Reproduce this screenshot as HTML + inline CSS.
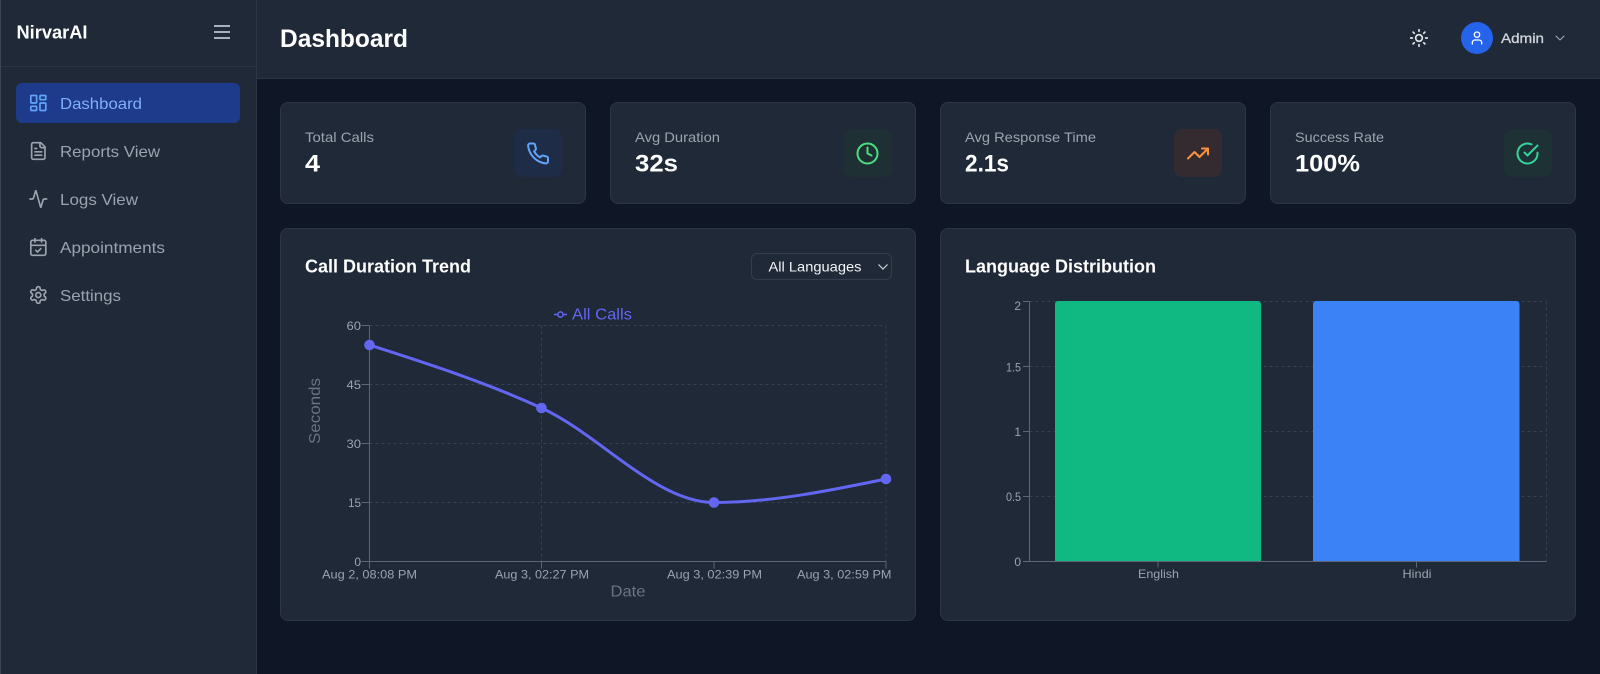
<!DOCTYPE html>
<html lang="en">
<head>
<meta charset="utf-8">
<title>NirvarAI Dashboard</title>
<style>
html,body{margin:0;padding:0;width:1600px;height:674px;overflow:hidden;background:#0f1625}
body{position:relative;font-family:"Liberation Sans",sans-serif}
.box{position:absolute;box-sizing:border-box}
.side{left:0;top:0;width:257px;height:674px;background:#1f2937;border-left:1px solid #3a4452;border-right:1px solid #2b3543}
.sdiv{left:1px;top:66px;width:255px;height:1px;background:#2b3543}
.head{left:257px;top:0;width:1343px;height:79px;background:#1f2937;border-bottom:1px solid #2b3543}
.active{left:16px;top:83px;width:224px;height:40px;background:#1e3a8a;border-radius:6px}
.card{background:#1f2937;border:1px solid #2c3644;border-radius:8px}
.ico{width:48px;height:48px;top:129px;border-radius:8px}
.sel{left:751px;top:253px;width:141px;height:27px;border:1px solid #333d4c;border-radius:6px;background:#1f2937}
.ava{left:1461px;top:22px;width:32px;height:32px;border-radius:50%;background:#2563eb}
svg.ov{position:absolute;left:0;top:0}
text{font-family:"Liberation Sans",sans-serif}
.ic{fill:none;stroke-linecap:round;stroke-linejoin:round;stroke-width:2}
.tk{font-size:12px;fill:#9ca3af}
.nav{font-size:16px;fill:#9ca3af}
.lb{font-size:14px;fill:#9ca3af}
.val{font-size:24.5px;font-weight:bold;fill:#fff}
.ttl{font-size:18px;font-weight:bold;fill:#fff}
.grid{stroke:#364050;stroke-width:1;stroke-dasharray:3 3;fill:none}
.axis{stroke:#5d6676;stroke-width:1;fill:none}
</style>
</head>
<body>
<aside class="box side"></aside>
<div class="box sdiv"></div>
<header class="box head"></header>
<div class="box active"></div>
<div class="box ava"></div>

<div class="box card" style="left:280px;top:102px;width:306px;height:102px"></div>
<div class="box card" style="left:610px;top:102px;width:306px;height:102px"></div>
<div class="box card" style="left:940px;top:102px;width:306px;height:102px"></div>
<div class="box card" style="left:1270px;top:102px;width:306px;height:102px"></div>
<div class="box ico" style="left:514px;background:#1f2c47"></div>
<div class="box ico" style="left:844px;background:#1e3033"></div>
<div class="box ico" style="left:1174px;background:#332b30"></div>
<div class="box ico" style="left:1504px;background:#1e3135"></div>

<div class="box card" style="left:280px;top:228px;width:636px;height:393px"></div>
<div class="box card" style="left:940px;top:228px;width:636px;height:393px"></div>
<div class="box sel"></div>

<svg class="ov" width="1600" height="674" viewBox="0 0 1600 674" xmlns="http://www.w3.org/2000/svg">
  <!-- sidebar -->
  <text x="16.5" y="38.5" font-size="18.5" font-weight="bold" fill="#fff" textLength="71" lengthAdjust="spacingAndGlyphs">NirvarAI</text>
  <g class="ic" stroke="#aab1bc" transform="translate(210 20)" style="stroke-linecap:butt"><path d="M4 6h16M4 12h16M4 18h16"/></g>

  <g class="ic" stroke="#60a5fa" transform="translate(28.3 93) scale(.8333)">
    <rect x="3" y="3" width="7" height="9" rx="1"/><rect x="14" y="3" width="7" height="5" rx="1"/><rect x="14" y="12" width="7" height="9" rx="1"/><rect x="3" y="16" width="7" height="5" rx="1"/>
  </g>
  <text x="60" y="109" class="nav" style="fill:#7fb0fb" textLength="82" lengthAdjust="spacingAndGlyphs">Dashboard</text>

  <g class="ic" stroke="#9ca3af" transform="translate(28.3 141) scale(.8333)">
    <path d="M15 2H6a2 2 0 0 0-2 2v16a2 2 0 0 0 2 2h12a2 2 0 0 0 2-2V7Z"/><path d="M14 2v4a2 2 0 0 0 2 2h4"/><path d="M10 9H8"/><path d="M16 13H8"/><path d="M16 17H8"/>
  </g>
  <text x="60" y="157" class="nav" textLength="100" lengthAdjust="spacingAndGlyphs">Reports View</text>

  <g class="ic" stroke="#9ca3af" transform="translate(28.3 189) scale(.8333)">
    <path d="M22 12h-2.48a2 2 0 0 0-1.93 1.46l-2.35 8.36a.25.25 0 0 1-.48 0L9.24 2.18a.25.25 0 0 0-.48 0l-2.35 8.36A2 2 0 0 1 4.49 12H2"/>
  </g>
  <text x="60" y="205" class="nav" textLength="78" lengthAdjust="spacingAndGlyphs">Logs View</text>

  <g class="ic" stroke="#9ca3af" transform="translate(28.3 237) scale(.8333)">
    <path d="M8 2v4"/><path d="M16 2v4"/><rect x="3" y="4" width="18" height="18" rx="2"/><path d="M3 10h18"/><path d="m9 16 2 2 4-4"/>
  </g>
  <text x="60" y="253" class="nav" textLength="105" lengthAdjust="spacingAndGlyphs">Appointments</text>

  <g class="ic" stroke="#9ca3af" transform="translate(28.3 285) scale(.8333)">
    <path d="M12.22 2h-.44a2 2 0 0 0-2 2v.18a2 2 0 0 1-1 1.73l-.43.25a2 2 0 0 1-2 0l-.15-.08a2 2 0 0 0-2.73.73l-.22.38a2 2 0 0 0 .73 2.73l.15.1a2 2 0 0 1 1 1.72v.51a2 2 0 0 1-1 1.74l-.15.09a2 2 0 0 0-.73 2.73l.22.38a2 2 0 0 0 2.73.73l.15-.08a2 2 0 0 1 2 0l.43.25a2 2 0 0 1 1 1.73V20a2 2 0 0 0 2 2h.44a2 2 0 0 0 2-2v-.18a2 2 0 0 1 1-1.73l.43-.25a2 2 0 0 1 2 0l.15.08a2 2 0 0 0 2.73-.73l.22-.39a2 2 0 0 0-.73-2.73l-.15-.08a2 2 0 0 1-1-1.74v-.5a2 2 0 0 1 1-1.74l.15-.09a2 2 0 0 0 .73-2.73l-.22-.38a2 2 0 0 0-2.73-.73l-.15.08a2 2 0 0 1-2 0l-.43-.25a2 2 0 0 1-1-1.73V4a2 2 0 0 0-2-2z"/><circle cx="12" cy="12" r="3"/>
  </g>
  <text x="60" y="301" class="nav" textLength="61" lengthAdjust="spacingAndGlyphs">Settings</text>

  <!-- header -->
  <text x="280" y="47" font-size="25" font-weight="bold" fill="#fff" textLength="128" lengthAdjust="spacingAndGlyphs">Dashboard</text>
  <g class="ic" stroke="#e5e7eb" transform="translate(1409 28) scale(.8333)">
    <circle cx="12" cy="12" r="4"/><path d="M12 2v2"/><path d="M12 20v2"/><path d="m4.93 4.93 1.41 1.41"/><path d="m17.66 17.66 1.41 1.41"/><path d="M2 12h2"/><path d="M20 12h2"/><path d="m6.34 17.66-1.41 1.41"/><path d="m19.07 4.93-1.41 1.41"/>
  </g>
  <g class="ic" stroke="#fff" transform="translate(1469 30) scale(.6667)">
    <path d="M19 21v-2a4 4 0 0 0-4-4H9a4 4 0 0 0-4 4v2"/><circle cx="12" cy="7" r="4"/>
  </g>
  <text x="1501" y="43" font-size="14" fill="#d1d5db" stroke="#d1d5db" stroke-width=".3" textLength="43" lengthAdjust="spacingAndGlyphs">Admin</text>
  <g class="ic" stroke="#9ca3af" transform="translate(1552 30) scale(.6667)" style="stroke-width:1.6"><path d="m6 9 6 6 6-6"/></g>

  <!-- stat cards -->
  <text x="305" y="142" class="lb" textLength="69" lengthAdjust="spacingAndGlyphs">Total Calls</text>
  <text x="305" y="171.5" class="val" textLength="15" lengthAdjust="spacingAndGlyphs">4</text>
  <g class="ic" stroke="#60a5fa" transform="translate(526 141.5)">
    <path d="M22 16.92v3a2 2 0 0 1-2.18 2 19.79 19.79 0 0 1-8.63-3.07 19.5 19.5 0 0 1-6-6 19.79 19.79 0 0 1-3.07-8.67A2 2 0 0 1 4.11 2h3a2 2 0 0 1 2 1.72 12.84 12.84 0 0 0 .7 2.81 2 2 0 0 1-.45 2.11L8.09 9.91a16 16 0 0 0 6 6l1.27-1.27a2 2 0 0 1 2.11-.45 12.84 12.84 0 0 0 2.81.7A2 2 0 0 1 22 16.92z"/>
  </g>

  <text x="635" y="142" class="lb" textLength="85" lengthAdjust="spacingAndGlyphs">Avg Duration</text>
  <text x="635" y="171.5" class="val" textLength="43" lengthAdjust="spacingAndGlyphs">32s</text>
  <g class="ic" stroke="#4ade80" transform="translate(855.5 141.5)">
    <circle cx="12" cy="12" r="10"/><polyline points="12 6 12 12 16 14"/>
  </g>

  <text x="965" y="142" class="lb" textLength="131" lengthAdjust="spacingAndGlyphs">Avg Response Time</text>
  <text x="965" y="171.5" class="val" textLength="44" lengthAdjust="spacingAndGlyphs">2.1s</text>
  <g class="ic" stroke="#fb923c" transform="translate(1186 141.5)">
    <polyline points="22 7 13.5 15.5 8.5 10.5 2 17"/><polyline points="16 7 22 7 22 13"/>
  </g>

  <text x="1295" y="142" class="lb" textLength="89" lengthAdjust="spacingAndGlyphs">Success Rate</text>
  <text x="1295" y="171.5" class="val" textLength="65" lengthAdjust="spacingAndGlyphs">100%</text>
  <g class="ic" stroke="#34d399" transform="translate(1515.5 141.5)">
    <path d="M22 11.08V12a10 10 0 1 1-5.93-9.14"/><polyline points="22 4 12 14.01 9 11.01"/>
  </g>

  <!-- trend chart -->
  <text x="305" y="272.5" class="ttl" textLength="166" lengthAdjust="spacingAndGlyphs">Call Duration Trend</text>
  <text x="768.5" y="271.5" font-size="14" fill="#f3f4f6" textLength="93" lengthAdjust="spacingAndGlyphs">All Languages</text>
  <path d="M878.5 264.5l4.5 4.5 4.5-4.5" fill="none" stroke="#d1d5db" stroke-width="1.2"/>

  <path d="M554 314.5h13" stroke="#6366f1" stroke-width="1.5" fill="none"/>
  <circle cx="560.5" cy="314.5" r="2.6" fill="#1f2937" stroke="#6366f1" stroke-width="1.5"/>
  <text x="572" y="319.5" font-size="16" fill="#6366f1" textLength="60" lengthAdjust="spacingAndGlyphs">All Calls</text>

  <path class="grid" d="M369.5 325.5H886M369.5 384.5H886M369.5 443.5H886M369.5 502.5H886M541.5 325.5V561.5M886 325.5V561.5"/>
  <path class="axis" d="M369.5 325.5V561.5H886M361.5 325.5h8M361.5 384.5h8M361.5 443.5h8M361.5 502.5h8M361.5 561.5h8M369.5 561.5v7M541.5 561.5v7M714 561.5v7M886 561.5v7"/>
  <g class="tk" text-anchor="end">
    <text x="361" y="330" textLength="14.5" lengthAdjust="spacingAndGlyphs">60</text>
    <text x="361" y="389" textLength="14.5" lengthAdjust="spacingAndGlyphs">45</text>
    <text x="361" y="448" textLength="14.5" lengthAdjust="spacingAndGlyphs">30</text>
    <text x="361" y="507" textLength="13" lengthAdjust="spacingAndGlyphs">15</text>
    <text x="361" y="566">0</text>
  </g>
  <g class="tk">
    <text x="322" y="578.5" textLength="95" lengthAdjust="spacingAndGlyphs">Aug 2, 08:08 PM</text>
    <text x="495" y="578.5" textLength="94" lengthAdjust="spacingAndGlyphs">Aug 3, 02:27 PM</text>
    <text x="667" y="578.5" textLength="95" lengthAdjust="spacingAndGlyphs">Aug 3, 02:39 PM</text>
    <text x="797" y="578.5" textLength="94.5" lengthAdjust="spacingAndGlyphs">Aug 3, 02:59 PM</text>
  </g>
  <text x="610.5" y="596.5" font-size="16" fill="#6b7280" textLength="35" lengthAdjust="spacingAndGlyphs">Date</text>
  <text transform="translate(320 411) rotate(-90)" text-anchor="middle" font-size="16" fill="#6b7280" textLength="66" lengthAdjust="spacingAndGlyphs">Seconds</text>

  <path d="M369.5 345C426.8 363.3 484.2 381.8 541.5 408C599 434.3 656.5 502.5 714 502.5C771.3 502.5 828.7 490.8 886 479" fill="none" stroke="#6366f1" stroke-width="3"/>
  <g fill="#6366f1">
    <circle cx="369.5" cy="345" r="5.3"/><circle cx="541.5" cy="408" r="5.3"/><circle cx="714" cy="502.5" r="5.3"/><circle cx="886" cy="479" r="5.3"/>
  </g>

  <!-- language chart -->
  <text x="965" y="272.5" class="ttl" textLength="191" lengthAdjust="spacingAndGlyphs">Language Distribution</text>
  <path class="grid" d="M1029.5 301.5H1546.5M1029.5 366.5H1546.5M1029.5 431.5H1546.5M1029.5 496.5H1546.5M1546.5 301.5V561.5"/>
  <path d="M1055 561.5V304a3 3 0 0 1 3-3H1258a3 3 0 0 1 3 3V561.5Z" fill="#10b981"/>
  <path d="M1313 561.5V304a3 3 0 0 1 3-3H1516.5a3 3 0 0 1 3 3V561.5Z" fill="#3b82f6"/>
  <path class="axis" d="M1029.5 301.5V561.5H1546.5M1023 301.5h6.5M1023 366.5h6.5M1023 431.5h6.5M1023 496.5h6.5M1023 561.5h6.5M1158 561.5v6M1416.5 561.5v6"/>
  <g class="tk" text-anchor="end">
    <text x="1021" y="310">2</text>
    <text x="1021" y="371.5" textLength="15" lengthAdjust="spacingAndGlyphs">1.5</text>
    <text x="1021" y="436">1</text>
    <text x="1021" y="501" textLength="15" lengthAdjust="spacingAndGlyphs">0.5</text>
    <text x="1021" y="566">0</text>
  </g>
  <g class="tk">
    <text x="1138" y="578" textLength="41" lengthAdjust="spacingAndGlyphs">English</text>
    <text x="1402.5" y="578" textLength="29" lengthAdjust="spacingAndGlyphs">Hindi</text>
  </g>
</svg>
</body>
</html>
